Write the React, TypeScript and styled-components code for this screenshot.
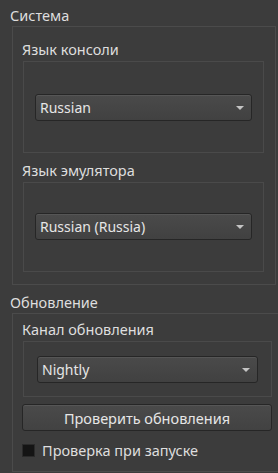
import React from "react";
import styled, { createGlobalStyle } from "styled-components";

const GlobalStyle = createGlobalStyle`
  html, body {
    margin: 0;
    padding: 0;
    background: #3c3c3c;
    overflow: hidden;
  }
  body {
    font-family: "Noto Sans", "DejaVu Sans", sans-serif;
    font-size: 14.5px;
    color: #dedede;
  }
`;

const Page = styled.div`
  width: 278px;
  height: 473px;
  display: flex;
  flex-direction: column;
  padding-top: 6px;
  box-sizing: border-box;
  overflow: hidden;
`;

const SectionTitle = styled.div`
  height: 18px;
  line-height: 18px;
  padding-left: 10px;
  margin-bottom: 2px;
`;

const Group = styled.div<{ $width: number; $padTop: number }>`
  margin-left: 12px;
  width: ${(p) => p.$width}px;
  flex-shrink: 0;
  box-sizing: border-box;
  border: 1px solid #4b4b4b;
  padding-top: ${(p) => p.$padTop}px;
  padding-bottom: 12px;
  display: flex;
  flex-direction: column;
  margin-bottom: 8px;
`;

const Label = styled.div<{ $gap?: number }>`
  height: 18px;
  line-height: 18px;
  padding-left: 9px;
  margin-top: ${(p) => p.$gap ?? 0}px;
`;

const Frame = styled.div<{ $height: number; $top: number; $side: number; $width: number }>`
  margin-left: 10px;
  width: ${(p) => p.$width}px;
  height: ${(p) => p.$height}px;
  box-sizing: border-box;
  border: 1px solid #4a4a4a;
  padding-top: ${(p) => p.$top}px;
  padding-left: ${(p) => p.$side}px;
  padding-right: ${(p) => p.$side}px;
  margin-top: 3px;
`;

const Combo = styled.div`
  height: 27px;
  box-sizing: border-box;
  border: 1px solid #262626;
  border-radius: 3px;
  background: linear-gradient(#4a4a4a, #414141);
  box-shadow: inset 0 1px 0 rgba(255, 255, 255, 0.07);
  display: flex;
  align-items: center;
  padding: 0 7px 0 4px;
  color: #e6e6e6;
  font-size: 14px;
`;

const ComboText = styled.span`
  flex: 1;
`;

const Arrow = styled.span`
  width: 0;
  height: 0;
  border-left: 4px solid transparent;
  border-right: 4px solid transparent;
  border-top: 4px solid #c4c4c4;
`;

const Button = styled.div`
  margin-left: 9px;
  margin-top: 7px;
  width: 250px;
  height: 27px;
  box-sizing: border-box;
  border: 1px solid #262626;
  border-radius: 3px;
  background: linear-gradient(#4a4a4a, #424242);
  box-shadow: inset 0 1px 0 rgba(255, 255, 255, 0.07);
  display: flex;
  align-items: center;
  justify-content: center;
  color: #e6e6e6;
`;

const CheckRow = styled.label`
  margin-left: 9px;
  margin-top: 10px;
  display: flex;
  align-items: center;
  gap: 7px;
  height: 18px;
`;

const Box = styled.span`
  width: 13px;
  height: 13px;
  box-sizing: border-box;
  background: #141414;
  border: 1px solid #2a2a2a;
`;

const Select = ({ value }: { value: string }) => (
  <Combo>
    <ComboText>{value}</ComboText>
    <Arrow />
  </Combo>
);

const App: React.FC = () => {
  return (
    <>
      <GlobalStyle />
      <Page>
        <SectionTitle>Система</SectionTitle>
        <Group $width={264} $padTop={13}>
          <Label>Язык консоли</Label>
          <Frame $width={241} $height={92} $top={32} $side={11}>
            <Select value="Russian" />
          </Frame>
          <Label $gap={8}>Язык эмулятора</Label>
          <Frame $width={241} $height={90} $top={30} $side={11}>
            <Select value="Russian (Russia)" />
          </Frame>
        </Group>
        <SectionTitle>Обновление</SectionTitle>
        <Group $width={274} $padTop={6}>
          <Label>Канал обновления</Label>
          <Frame $width={249} $height={56} $top={14} $side={13}>
            <Select value="Nightly" />
          </Frame>
          <Button>Проверить обновления</Button>
          <CheckRow>
            <Box />
            Проверка при запуске
          </CheckRow>
        </Group>
      </Page>
    </>
  );
};

export default App;
